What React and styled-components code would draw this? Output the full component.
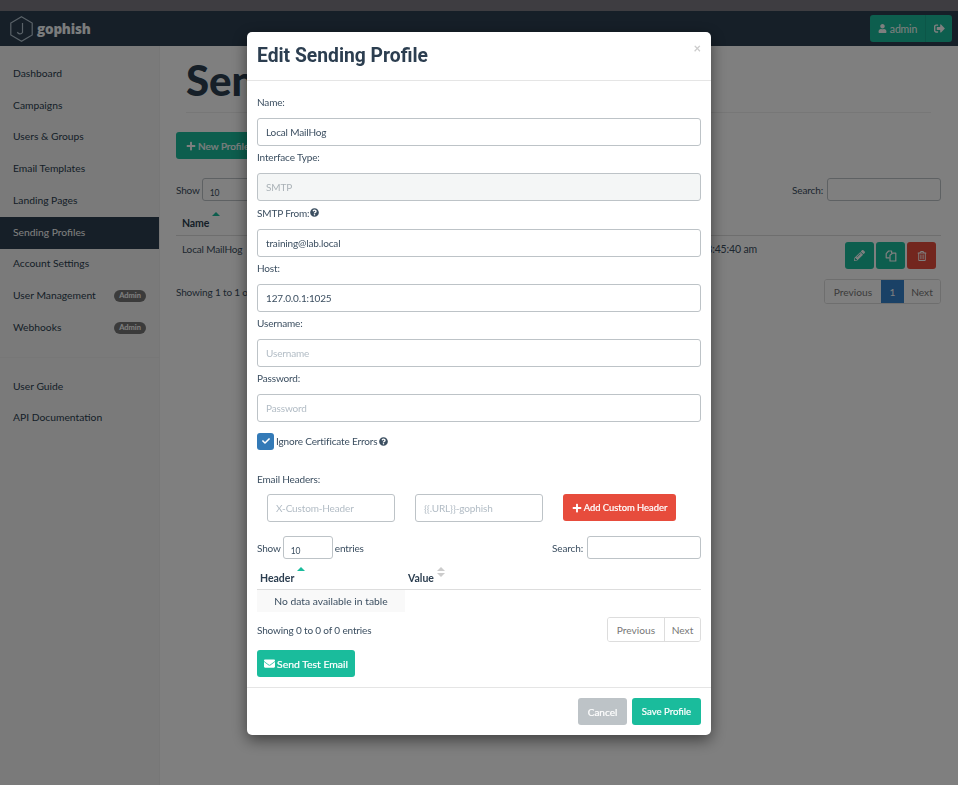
import React from "react";
import styled, { createGlobalStyle } from "styled-components";
import { FaUser, FaPencilAlt, FaRegTrashAlt, FaPlus, FaEnvelope, FaQuestionCircle, FaCheck, FaSignOutAlt } from "react-icons/fa";

const Global = createGlobalStyle`
  html, body { margin: 0; padding: 0; height: 100%; overflow: hidden; }
  body { font-family: "Lato", "Liberation Sans", sans-serif; font-size: 10px; letter-spacing: -0.15px; color: #3b4e60; background: #fff; }
  * { box-sizing: border-box; }
`;

const Page = styled.div`width: 958px; height: 785px; display: flex; flex-direction: column; overflow: hidden;`;
const TopStrip = styled.div`height: 11px; background: #7c7a82; flex: none;`;
const Navbar = styled.header`height: 35px; flex: none; background: #2c3e50; display: flex; align-items: center; justify-content: space-between; padding: 0 6px 0 10px;`;
const Brand = styled.div`display: flex; align-items: center; gap: 4px; color: #f5f8fa; font-weight: 800; font-size: 13.5px; letter-spacing: -0.2px; font-family: "Open Sans", sans-serif;`;
const UserGroup = styled.div`display: flex; height: 27px; border-radius: 3px; overflow: hidden; background: #1abc9c; color: #fff;`;
const UserBtn = styled.div`width: 56px; display: flex; align-items: center; justify-content: center; gap: 3px; font-size: 10.5px; border-right: 1px solid #18ad90;`;
const ExitBtn = styled.div`display: flex; align-items: center; justify-content: center; width: 26px;`;
const Shell = styled.div`flex: 1; display: flex; min-height: 0;`;
const Sidebar = styled.nav`width: 160px; flex: none; background: #f5f5f5; padding-top: 12px; border-right: 1px solid #eee;`;
const NavItem = styled.div`height: 31.75px; display: flex; align-items: center; justify-content: space-between; padding: 0 13px 2px; font-size: 10.3px; letter-spacing: 0; color: ${p => p.$active ? "#fff" : "#2c3e50"}; background: ${p => p.$active ? "#2c3e50" : "transparent"};`;
const Badge = styled.span`background: #777; color: #fff; border-radius: 8px; font-size: 7.5px; font-weight: 700; padding: 2px 5px; line-height: 8px; margin-top: 2px;`;
const NavDivider = styled.div`height: 1px; background: #eee; margin: 13px 0;`;
const Main = styled.main`flex: 1; padding: 0 17px 0 16px; background: #fff; position: relative;`;
const Heading = styled.h1`margin: 12px 10px 0; font-size: 42px; line-height: 44px; font-weight: 900; color: #2c3e50; padding-bottom: 10px; border-bottom: 1px solid #eee; white-space: nowrap; letter-spacing: 0;`;
const GreenBtn = styled.button`display: inline-flex; align-items: center; justify-content: center; gap: 2px; border: 0; border-radius: 3px; background: #1abc9c; color: #fff; font: 400 10px "Lato", sans-serif; letter-spacing: 0; -webkit-text-stroke: 0.2px #fff; height: 27px; padding: 0 10px;`;
const MainActions = styled.div`margin-top: 19px; height: 27px; display: flex;`;
const Controls = styled.div`display: flex; justify-content: space-between; align-items: center;`;
const PageControls = styled(Controls)`margin-top: 19px;`;
const Inline = styled.div`display: flex; align-items: center; gap: 2px;`;
const SelectBox = styled.div`width: 50px; height: 23px; border: 1px solid #bdc3c7; border-radius: 3px; background: #fff; padding: 9px 0 0 7px; font-size: 8.5px;`;
const SearchBox = styled.div`width: 114px; height: 23px; margin-left: 2px; border: 1px solid #bdc3c7; border-radius: 3px; background: #fff;`;
const BgHead = styled.div`height: 35px; display: flex; align-items: center; padding: 9px 6px 0; border-bottom: 1px solid #ddd; font-weight: 700; font-size: 10.5px; color: #2c3e50;`;
const BgRow = styled.div`height: 43px; display: flex; padding: 6px 5px 0 6px;`;
const BgName = styled.span`margin-top: 1px;`;
const BgTime = styled.div`margin-left: auto; margin-right: 88px; margin-top: 1px; font-size: 10.5px;`;
const RowBtns = styled.div`display: flex; gap: 2px; height: 27px;`;
const IconBtn = styled.div`width: 29px; height: 27px; border-radius: 3px; display: flex; align-items: center; justify-content: center; color: #fff; background: ${p => p.$danger ? "#e74c3c" : "#1abc9c"};`;
const Pager = styled.div`display: flex; height: 25px; border: 1px solid #ddd; border-radius: 3px; color: #888; overflow: hidden; font-size: 10.2px; letter-spacing: 0;`;
const PageCell = styled.div`display: flex; align-items: center; justify-content: center; width: ${p => p.$w}px; background: ${p => p.$on ? "#3582cc" : "#fff"}; color: ${p => p.$on ? "#fff" : "#777"}; border-left: ${p => p.$sep ? "1px solid #ddd" : "0"};`;

const Overlay = styled.div`position: fixed; inset: 0; background: rgba(0,0,0,0.5); display: flex; padding: 32px 0 0 247px;`;
const Modal = styled.div`width: 464px; height: 703px; background: #fff; border-radius: 5px; box-shadow: 0 5px 15px rgba(0,0,0,0.5); display: flex; flex-direction: column;`;
const ModalHead = styled.div`height: 49px; flex: none; padding: 0 10px; border-bottom: 1px solid #e5e5e5; display: flex; align-items: center; justify-content: space-between;`;
const Title = styled.h4`margin: 0; font: 700 19.3px/24px "Roboto", sans-serif; letter-spacing: 0; color: #2c3e50;`;
const Close = styled.span`color: #ccc; font-size: 13px; font-weight: 700; margin-top: -16px;`;
const ModalBody = styled.div`flex: 1; padding: 13px 10px 0;`;
const Field = styled.div`height: 55.3px;`;
const Label = styled.div`height: 16px; line-height: 14px; display: flex; align-items: center; gap: 1px;`;
const Input = styled.div`height: 28px; margin-top: 8px; border: 1px solid #bdc3c7; border-radius: 3px; display: flex; align-items: center; padding: 0 8px; color: ${p => p.$ph ? "#b2bcc5" : "#3b4e60"}; background: ${p => p.$off ? "#f4f6f6" : "#fff"}; ${p => p.$off && "color:#aab2b7;"} width: ${p => p.$w || "auto"};`;
const CheckRow = styled.div`display: flex; align-items: center; gap: 2px; height: 17px; margin-top: 7px;`;
const CheckBox = styled.div`width: 17px; height: 17px; border-radius: 3px; background: #337ab7; color: #fff; display: flex; align-items: center; justify-content: center; font-size: 8px;`;
const HeadersLabel = styled(Label)`margin-top: 21px;`;
const HeaderForm = styled.div`display: flex; gap: 20px; padding-left: 10px; margin-top: 7.4px;`;
const HeaderInput = styled(Input)`margin-top: 0;`;
const RedBtn = styled(GreenBtn)`background: #e74c3c; width: 113px; padding: 0; font-size: 9.4px;`;
const ModalControls = styled(Controls)`margin-top: 14px;`;
const HeadRow = styled.div`height: 31px; display: grid; grid-template-columns: 148px 1fr; align-items: end; padding: 0 3px 5px; border-bottom: 1px solid #ddd; font-weight: 700; font-size: 10.5px; letter-spacing: 0; color: #2c3e50;`;
const Sort = styled.span`
  position: relative; display: inline-block;
  &::after { content: ""; position: absolute; right: -11px; top: -5px; border: 4px solid transparent; border-top: 0; border-bottom: 4px solid ${p => p.$c}; }
  ${p => p.$both && `&::before { content: ""; position: absolute; right: -11px; top: 1px; border: 4px solid transparent; border-bottom: 0; border-top: 4px solid ${p.$c}; }`}
`;
const EmptyCell = styled.div`width: 148px; height: 22px; background: #f9f9f9; display: flex; align-items: center; justify-content: center; letter-spacing: 0; font-size: 10.3px;`;
const ModalPageRow = styled(Controls)`margin-top: 5px;`;
const SendBtn = styled(GreenBtn)`margin-top: 8px; width: 98px; padding: 0; font-size: 10.4px;`;
const ModalFoot = styled.div`height: 48px; flex: none; border-top: 1px solid #e5e5e5; display: flex; justify-content: flex-end; gap: 5px; padding: 10px 10px 0;`;
const CancelBtn = styled(GreenBtn)`background: #bdc3c7; width: 49px; padding: 0;`;
const SaveBtn = styled(GreenBtn)`width: 69px; padding: 0; font-size: 9.6px;`;

const Logo = () => (
  <svg width="23" height="26" viewBox="0 0 23 26" fill="none" stroke="#b4c4d0" strokeWidth="1.2">
    <path d="M11.5 0.8 22.2 7V19L11.5 25.2 0.8 19V7Z" />
    <path d="M12.5 7V16.5A2.8 2.8 0 0 1 7.4 16" />
  </svg>
);

const CopyIcon = () => (
  <svg width="12" height="12" viewBox="0 0 12 12" fill="none" stroke="#fff" strokeWidth="1.2" strokeLinejoin="round">
    <path d="M4.6 7.8H1.2V3.6L3.6 1H6.6V3.2" />
    <path d="M5 5.2 7.4 3.2H10.8V11H5Z" />
  </svg>
);

const nav = ["Dashboard", "Campaigns", "Users & Groups", "Email Templates", "Landing Pages", "Sending Profiles", "Account Settings", "User Management", "Webhooks"];

export default function App() {
  return (
    <Page>
      <Global />
      <TopStrip />
      <Navbar>
        <Brand><Logo />gophish</Brand>
        <UserGroup>
          <UserBtn><FaUser size={9} /> admin</UserBtn>
          <ExitBtn><FaSignOutAlt size={11} /></ExitBtn>
        </UserGroup>
      </Navbar>
      <Shell>
        <Sidebar>
          {nav.map(n => (
            <NavItem key={n} $active={n === "Sending Profiles"}>
              {n}{(n === "User Management" || n === "Webhooks") && <Badge>Admin</Badge>}
            </NavItem>
          ))}
          <NavDivider />
          <NavItem>User Guide</NavItem>
          <NavItem>API Documentation</NavItem>
        </Sidebar>
        <Main>
          <Heading>Sending Profiles</Heading>
          <MainActions><GreenBtn><FaPlus size={10} /> New Profile</GreenBtn></MainActions>
          <PageControls>
            <Inline>Show <SelectBox>10</SelectBox> entries</Inline>
            <Inline>Search: <SearchBox /></Inline>
          </PageControls>
          <BgHead><Sort $c="#1abc9c">Name</Sort></BgHead>
          <BgRow>
            <BgName>Local MailHog</BgName>
            <BgTime>8:45:40 am</BgTime>
            <RowBtns>
              <IconBtn><FaPencilAlt size={11} /></IconBtn>
              <IconBtn><CopyIcon /></IconBtn>
              <IconBtn $danger><FaRegTrashAlt size={10} /></IconBtn>
            </RowBtns>
          </BgRow>
          <Controls>
            <span>Showing 1 to 1 of 1 entries</span>
            <Pager><PageCell $w={56}>Previous</PageCell><PageCell $w={23} $on>1</PageCell><PageCell $w={36}>Next</PageCell></Pager>
          </Controls>
        </Main>
      </Shell>
      <Overlay>
        <Modal>
          <ModalHead><Title>Edit Sending Profile</Title><Close>×</Close></ModalHead>
          <ModalBody>
            <Field><Label>Name:</Label><Input>Local MailHog</Input></Field>
            <Field><Label>Interface Type:</Label><Input $off>SMTP</Input></Field>
            <Field><Label>SMTP From: <FaQuestionCircle size={9} /></Label><Input>training@lab.local</Input></Field>
            <Field><Label>Host:</Label><Input>127.0.0.1:1025</Input></Field>
            <Field><Label>Username:</Label><Input $ph>Username</Input></Field>
            <Field><Label>Password:</Label><Input $ph>Password</Input></Field>
            <CheckRow><CheckBox><FaCheck /></CheckBox>Ignore Certificate Errors <FaQuestionCircle size={9} /></CheckRow>
            <HeadersLabel>Email Headers:</HeadersLabel>
            <HeaderForm>
              <HeaderInput $ph $w="128px">X-Custom-Header</HeaderInput>
              <HeaderInput $ph $w="128px">{"{{.URL}}-gophish"}</HeaderInput>
              <RedBtn><FaPlus size={10} /> Add Custom Header</RedBtn>
            </HeaderForm>
            <ModalControls>
              <Inline>Show <SelectBox>10</SelectBox> entries</Inline>
              <Inline>Search: <SearchBox /></Inline>
            </ModalControls>
            <HeadRow>
              <span><Sort $c="#1abc9c">Header</Sort></span>
              <span><Sort $both $c="#ccc">Value</Sort></span>
            </HeadRow>
            <EmptyCell>No data available in table</EmptyCell>
            <ModalPageRow>
              <span>Showing 0 to 0 of 0 entries</span>
              <Pager><PageCell $w={56}>Previous</PageCell><PageCell $w={36} $sep>Next</PageCell></Pager>
            </ModalPageRow>
            <SendBtn><FaEnvelope size={11} /> Send Test Email</SendBtn>
          </ModalBody>
          <ModalFoot>
            <CancelBtn>Cancel</CancelBtn>
            <SaveBtn>Save Profile</SaveBtn>
          </ModalFoot>
        </Modal>
      </Overlay>
    </Page>
  );
}
